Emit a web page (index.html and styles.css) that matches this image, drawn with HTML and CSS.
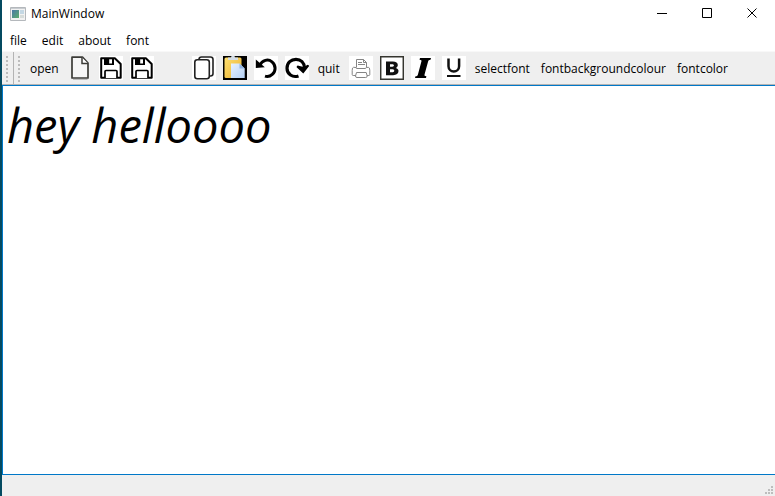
FILE: index.html
```html
<!DOCTYPE html>
<html lang="en">
<head>
<meta charset="utf-8">
<title>MainWindow</title>
<link rel="stylesheet" href="styles.css">
</head>
<body>
<div class="window">
  <header class="titlebar">
    <svg class="app-icon" width="16" height="14" viewBox="0 0 16 14" aria-hidden="true">
      <defs><linearGradient id="app" x2="1" y2="1"><stop stop-color="#4a78a8"/><stop offset="1" stop-color="#5cae6c"/></linearGradient></defs>
      <path d="M.5.5h15v13H.5z" fill="#f2f2f2" stroke="#b4b8bc"/>
      <path d="M1 1h14v1H1z" fill="#c8ccd0"/>
      <path d="M2 3h7v8H2z" fill="url(#app)"/>
      <path d="M10 3h4v4h-4z" fill="#c4d8e4"/><path d="M10 8h4v3h-4z" fill="#d6dcda"/>
    </svg>
    <h1 class="title">MainWindow</h1>
    <div class="controls">
      <button class="control" aria-label="Minimize"><svg width="11" height="11" viewBox="0 0 11 11"><path d="M0 5.5h10"/></svg></button>
      <button class="control" aria-label="Maximize"><svg width="11" height="11" viewBox="0 0 11 11"><path d="M.5.5h9v9h-9z"/></svg></button>
      <button class="control" aria-label="Close"><svg width="11" height="11" viewBox="0 0 11 11"><path d="M.5.5l9 9M9.5.5l-9 9"/></svg></button>
    </div>
  </header>
  <nav class="menubar">
    <button class="menu">file</button>
    <button class="menu">edit</button>
    <button class="menu">about</button>
    <button class="menu">font</button>
  </nav>
  <div class="toolbar" role="toolbar">
    <span class="grip grip-divided"></span>
    <span class="grip"></span>
    <div class="tools">
      <button class="tool tool-text">open</button>
      <button class="tool" aria-label="New"><svg width="24" height="24" viewBox="0 0 24 24"><path d="M4 1.2h10.5L20 7v15H4z" fill="#f6f6f6" stroke="#3c3c38" stroke-width="1.7" stroke-linejoin="round"/><path d="M14 1.5v6h6" fill="#fff" stroke="#3c3c38" stroke-width="1.5"/><path d="M5 23.5h14.5" stroke="#bbb"/></svg></button>
      <button class="tool" aria-label="Save"><svg width="24" height="24" viewBox="0 0 24 24"><path d="M0 0h24v24H0z" fill="#fff"/><path d="M2.2 2.2h13.6L21.7 8v13.7H2.2z" fill="#fff" stroke="#000" stroke-width="2" stroke-linejoin="round"/><path d="M5 2h10v7H5z"/><path d="M10.2 3.3h2.8v4.2h-2.8z" fill="#fff"/><path d="M6 22v-6.5q0-1 1-1h10q1 0 1 1V22" fill="#fff" stroke="#000" stroke-width="1.7"/></svg></button>
      <button class="tool" aria-label="Save as"><svg width="24" height="24" viewBox="0 0 24 24"><path d="M0 0h24v24H0z" fill="#fff"/><path d="M2.2 2.2h13.6L21.7 8v13.7H2.2z" fill="#fff" stroke="#000" stroke-width="2" stroke-linejoin="round"/><path d="M5 2h10v7H5z"/><path d="M10.2 3.3h2.8v4.2h-2.8z" fill="#fff"/><path d="M6 22v-6.5q0-1 1-1h10q1 0 1 1V22" fill="#fff" stroke="#000" stroke-width="1.7"/></svg></button>
      <button class="tool" aria-label="Cut"></button>
      <button class="tool" aria-label="Copy"><svg width="24" height="24" viewBox="0 0 24 24"><path d="M0 0h24v24H0z" fill="#fff"/><g fill="#fff" stroke="#222" stroke-width="1.6"><rect x="7" y="1" width="14" height="19" rx="2.5"/><rect x="2.8" y="3.7" width="14.5" height="19" rx="2.5"/></g></svg></button>
      <button class="tool" aria-label="Paste"><svg width="24" height="24" viewBox="0 0 24 24"><defs><linearGradient id="board" x2="1" y2="1"><stop stop-color="#ffe070"/><stop offset="1" stop-color="#e8b030"/></linearGradient><linearGradient id="sheet" x2="1" y2="1"><stop stop-color="#e8f2ff"/><stop offset="1" stop-color="#b4d0f4"/></linearGradient></defs><path d="M0 0h24v24H0z"/><rect x="1.5" y="1.5" width="17" height="20.5" rx="1.5" fill="url(#board)"/><path d="M5 4V1.6h3L8.5 0h3l.5 1.6h3V4z" fill="#d3dce6"/><path d="M8 7.5h8.5l5.2 5V22H8z" fill="url(#sheet)"/><path d="M16.5 7.5v5h5.2z" fill="#8fb4e2"/></svg></button>
      <button class="tool" aria-label="Undo"><svg width="24" height="24" viewBox="0 0 24 24"><path d="M0 0h24v24H0z" fill="#fff"/><path d="M5.5 9.5C8.5 4 14 2.6 18 5.8c4 3.3 4.1 9.3.3 12.6-2.1 1.9-4.9 2.6-7.3 1.8" fill="none" stroke="#000" stroke-width="3"/><path d="M1.8 3.4v8.6l9-.8z"/></svg></button>
      <button class="tool" aria-label="Redo"><svg width="24" height="24" viewBox="0 0 24 24"><path d="M0 0h24v24H0z" fill="#fff"/><path d="M13.5 19.9C7.5 22 2 18 2 12.2 2 6.7 6.2 3.3 11 3.3c4.9 0 8.2 3.5 8.4 8.2" fill="none" stroke="#000" stroke-width="3.2"/><path d="M11.6 11.2q0-2 2-1.5l5 1.4 3.6-2.2q1.8-.6 1.8 1.4l-5.7 7.2z"/></svg></button>
      <button class="tool tool-text">quit</button>
      <button class="tool" aria-label="Print"><svg width="24" height="24" viewBox="0 0 24 24"><path d="M0 0h24v24H0z" fill="#fff"/><g fill="#fff" stroke="#858585"><path d="M7.5 11.5v-8h7l3 3v5M14.5 3.5v3h3M9 6.5h4M9 8.5h7"/><path d="M7 11.5l-2.5-.2q-1.3 0-1.3 3v4.2q0 1 1 1h15.6q1 0 1-1v-4.2q0-3-1.5-3l-2 .2q-.3 1-1.3 1H8q-1 0-1-1z"/><path d="M7.5 16.5h9.7l1 3.5q0 1.5-1.5 1.5H8q-1.5 0-1.5-1.5z"/></g></svg></button>
      <button class="tool" aria-label="Bold"><svg width="24" height="24" viewBox="0 0 24 24"><path d="M.7.7h22.6v22.6H.7z" fill="#fff" stroke="#35352f" stroke-width="1.5"/><path d="M6 5.5h6.8c3.3 0 5 1.2 5 3.6 0 1.4-.8 2.4-2 2.8 1.8.4 2.7 1.6 2.7 3.2 0 2.6-2 4.1-5.3 4.1H6zm4 2.8v2.4h2.4c2 0 2-2.4 0-2.4zm0 5v3h2.7c2.1 0 2.1-3 0-3z" fill="#111" fill-rule="evenodd"/></svg></button>
      <button class="tool" aria-label="Italic"><svg width="24" height="24" viewBox="0 0 24 24"><path d="M0 0h24v24H0z" fill="#fff"/><path d="M9 2h11l-.5 1.7c-1.7.2-2 .5-2.4 1.7l-3.5 12.8c-.4 1.5 0 1.8 1.8 2.1L15 22H4l.5-1.7c1.7-.2 2.1-.7 2.5-2.1l3.4-12.6c.3-1.2 0-1.7-1.9-1.9z"/></svg></button>
      <button class="tool" aria-label="Underline"><svg width="24" height="24" viewBox="0 0 24 24"><path d="M0 0h24v24H0z" fill="#fff"/><path d="M6.5 2.5v7.7c0 6.9 10.6 6.9 10.6 0V2.5" fill="none" stroke="#111" stroke-width="2.5"/><path d="M5 19h13.5v2H5z" fill="#111"/></svg></button>
      <button class="tool tool-text">selectfont</button>
      <button class="tool tool-text">fontbackgroundcolour</button>
      <button class="tool tool-text">fontcolor</button>
    </div>
  </div>
  <textarea class="editor" aria-label="Document" spellcheck="false">hey helloooo</textarea>
  <footer class="statusbar">
    <svg width="8" height="8" viewBox="0 0 8 8" fill="#bdbdbd" aria-hidden="true"><path d="M6 0h2v2H6zM3 3h2v2H3zM6 3h2v2H6zM0 6h2v2H0zM3 6h2v2H3zM6 6h2v2H6z"/></svg>
  </footer>
</div>
</body>
</html>
```
FILE: styles.css
```css
* {
  box-sizing: border-box;
}

body {
  margin: 0;
  background: #fff;
  color: #000;
  font: 12px/16px "Open Sans", "Noto Sans", sans-serif;
}

button {
  margin: 0;
  padding: 0;
  border: 0;
  background: none;
  color: inherit;
  font: inherit;
}

svg {
  display: block;
}

.window {
  display: flex;
  flex-direction: column;
  height: 100vh;
  border-left: 2px solid #044a60;
}

.titlebar {
  display: flex;
  align-items: center;
  height: 27px;
  padding-left: 8px;
}

.title {
  flex: 1;
  margin: 0 0 0 5px;
  font-size: 12px;
  font-weight: 400;
}

.controls {
  display: flex;
}

.control {
  display: grid;
  place-items: center;
  width: 45px;
  height: 27px;
}

.control path {
  fill: none;
  stroke: #000;
}

.menubar {
  display: flex;
  height: 24px;
}

.menu {
  padding: 4px 8px 0;
}

.menu + .menu {
  padding-left: 7px;
}

.toolbar {
  display: flex;
  height: 34px;
  background: #efefef;
  border-top: 1px solid #f8f8f8;
  border-bottom: 1px solid #b4b4b4;
}

.grip {
  width: 11px;
  padding: 4px 4px;
}

.grip::before {
  content: "";
  display: block;
  width: 2px;
  height: 26px;
  background: repeating-linear-gradient(#bcbcbc 0 2px, transparent 2px 4px);
}

.grip-divided {
  width: 12px;
  border-right: 1px solid #b4b4b4;
}

.tools {
  display: flex;
  align-items: center;
  gap: 1px;
}

.tool {
  display: grid;
  place-items: center;
  width: 30px;
  height: 30px;
}

.tool-text {
  width: auto;
  padding: 2px 5px 0;
}

.editor {
  flex: 1;
  width: 100%;
  margin: 0;
  padding: 6px 4px;
  border: 1px solid #0078c8;
  border-right: 0;
  outline: 0;
  resize: none;
  background: #fff;
  color: #000;
  font: italic 47px/66px "Open Sans", "Noto Sans", sans-serif;
}

.statusbar {
  display: flex;
  align-items: flex-end;
  justify-content: flex-end;
  height: 21px;
  padding: 2px;
  background: #efefef;
}
```
